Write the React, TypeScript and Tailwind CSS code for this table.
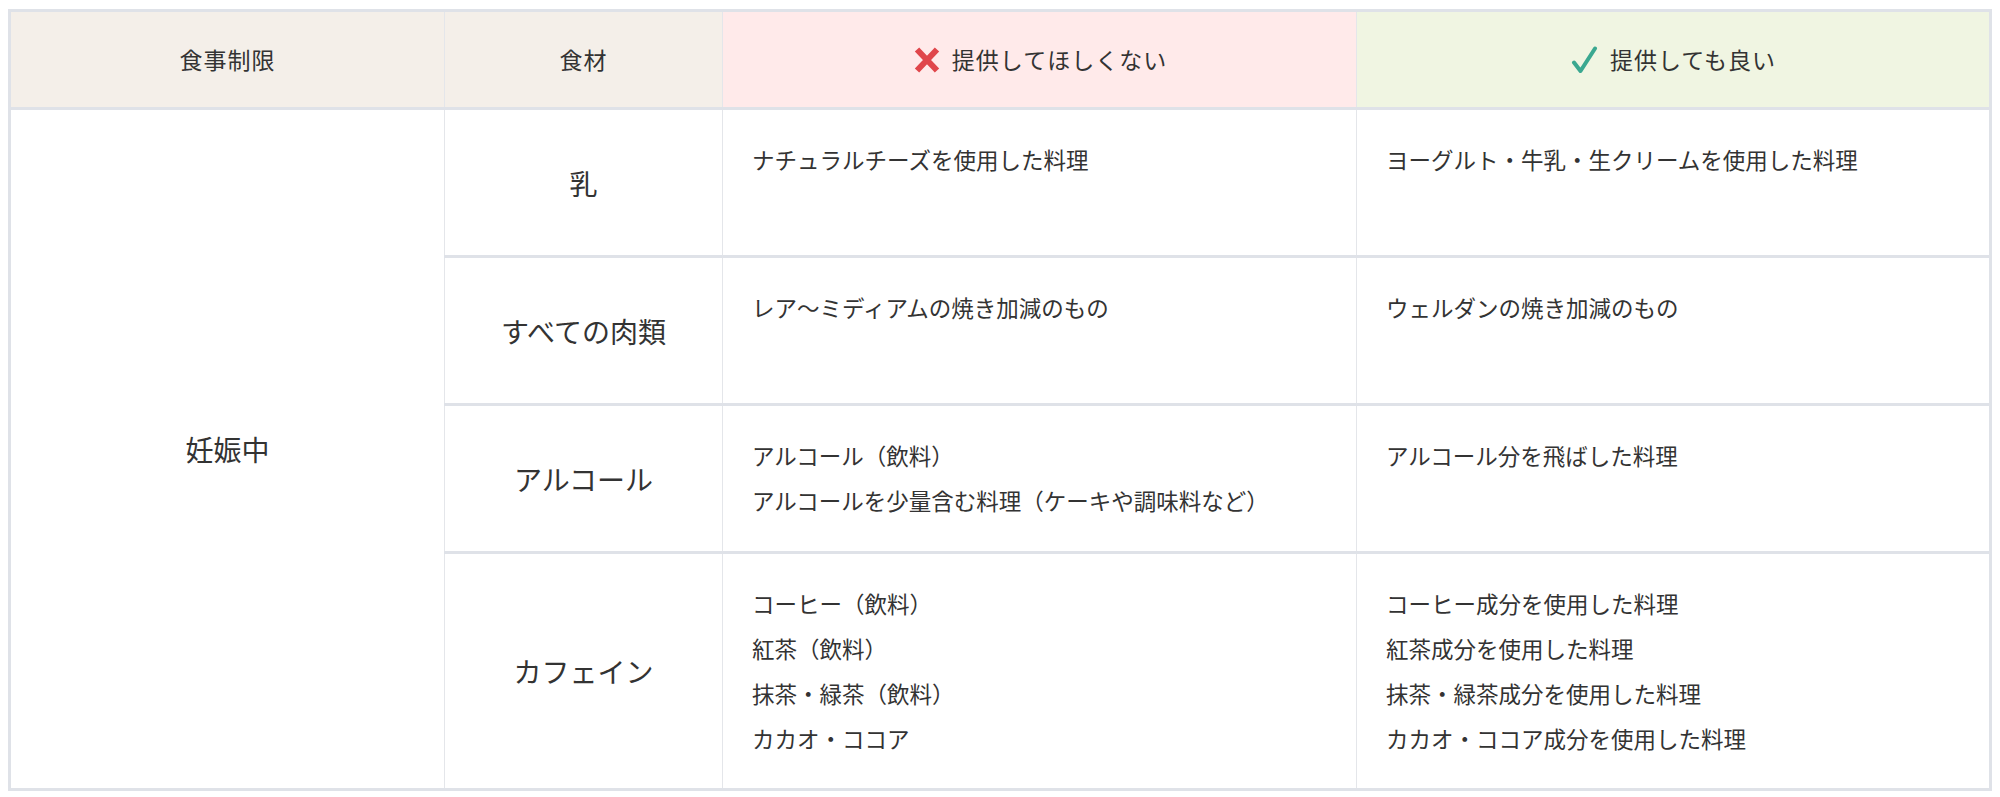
import React from "react";

type Row = {
  food: string;
  ng: string[];
  ok: string[];
  tall?: boolean;
};

const rows: Row[] = [
  {
    food: "乳",
    ng: ["ナチュラルチーズを使用した料理"],
    ok: ["ヨーグルト・牛乳・生クリームを使用した料理"],
  },
  {
    food: "すべての肉類",
    ng: ["レア～ミディアムの焼き加減のもの"],
    ok: ["ウェルダンの焼き加減のもの"],
  },
  {
    food: "アルコール",
    ng: ["アルコール（飲料）", "アルコールを少量含む料理（ケーキや調味料など）"],
    ok: ["アルコール分を飛ばした料理"],
  },
  {
    food: "カフェイン",
    ng: ["コーヒー（飲料）", "紅茶（飲料）", "抹茶・緑茶（飲料）", "カカオ・ココア"],
    ok: [
      "コーヒー成分を使用した料理",
      "紅茶成分を使用した料理",
      "抹茶・緑茶成分を使用した料理",
      "カカオ・ココア成分を使用した料理",
    ],
    tall: true,
  },
];

function CrossIcon() {
  return (
    <svg width="30" height="28" viewBox="0 0 30 28" aria-hidden="true">
      <path
        d="M5 3.5 L25 24.5 M25 3.5 L5 24.5"
        stroke="#e0464b"
        strokeWidth="6"
        strokeLinecap="butt"
        fill="none"
      />
    </svg>
  );
}

function CheckIcon() {
  return (
    <svg width="28" height="28" viewBox="0 0 28 28" aria-hidden="true">
      <path
        d="M4 16.5 L10.5 25 L25 2.5"
        stroke="#3aa890"
        strokeWidth="4"
        strokeLinecap="round"
        strokeLinejoin="round"
        fill="none"
      />
    </svg>
  );
}

function Lines({ items }: { items: string[] }) {
  return (
    <div className="px-[29px] py-[27px] text-[22.5px] leading-[45px]">
      {items.map((t) => (
        <p key={t}>{t}</p>
      ))}
    </div>
  );
}

export default function App() {
  return (
    <div
      className="bg-white px-2 pt-[9px] text-[#333]"
      style={{ fontFamily: '"Noto Sans CJK JP", "Noto Sans", sans-serif' }}
    >
      <div className="w-[1984px] border-[3px] border-[#dfe2e8]">
        {/* header */}
        <div className="grid h-[98px] grid-cols-[433px_278px_634px_633px] border-b-[3px] border-[#dfe2e8] text-[23px] tracking-[1px]">
          <div className="flex items-center justify-center bg-[#f4efe9]">食事制限</div>
          <div className="flex items-center justify-center border-l border-[#e4e6ea] bg-[#f4efe9]">
            食材
          </div>
          <div className="flex items-center justify-center gap-[10px] border-l border-[#e4e6ea] bg-[#ffeaea]">
            <CrossIcon />
            <span>提供してほしくない</span>
          </div>
          <div className="flex items-center justify-center gap-[12px] border-l border-[#e4e6ea] bg-[#f0f5e2]">
            <CheckIcon />
            <span>提供しても良い</span>
          </div>
        </div>

        {/* body */}
        <div className="flex">
          <div className="flex w-[433px] items-center justify-center text-[28px]">妊娠中</div>
          <div className="flex flex-1 flex-col">
            {rows.map((r, i) => (
              <div
                key={r.food}
                className={
                  "grid grid-cols-[278px_634px_633px] " +
                  (r.tall ? "min-h-[234px]" : "min-h-[148px]") +
                  (i < rows.length - 1 ? " border-b-[3px] border-[#dfe2e8]" : "")
                }
              >
                <div className="flex items-center justify-center border-l border-[#e4e6ea] text-[28px]">
                  {r.food}
                </div>
                <div className="border-l border-[#e4e6ea]">
                  <Lines items={r.ng} />
                </div>
                <div className="border-l border-[#e4e6ea]">
                  <Lines items={r.ok} />
                </div>
              </div>
            ))}
          </div>
        </div>
      </div>
    </div>
  );
}
